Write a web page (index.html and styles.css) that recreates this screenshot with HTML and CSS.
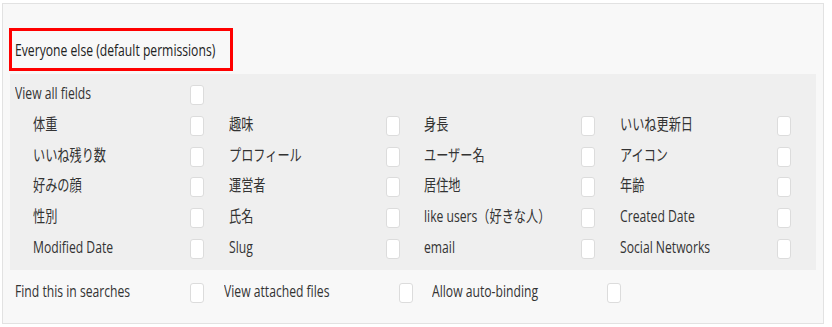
FILE: index.html
```html
<!DOCTYPE html>
<html lang="ja">
<head>
<meta charset="utf-8">
<title>Permissions</title>
<link rel="stylesheet" href="styles.css">
</head>
<body>
<div class="panel">
  <div class="head"><span class="txt title">Everyone else (default permissions)</span></div>
  <div class="fields">
    <div class="all-row"><span class="lbl"><span class="txt">View all fields</span></span><span class="cb"></span></div>
    <div class="grid">
      <div class="item"><span class="lbl"><span class="txt">体重</span></span><span class="cb"></span></div>
      <div class="item"><span class="lbl"><span class="txt">趣味</span></span><span class="cb"></span></div>
      <div class="item"><span class="lbl"><span class="txt">身長</span></span><span class="cb"></span></div>
      <div class="item"><span class="lbl"><span class="txt">いいね更新日</span></span><span class="cb"></span></div>
      <div class="item"><span class="lbl"><span class="txt">いいね残り数</span></span><span class="cb"></span></div>
      <div class="item"><span class="lbl"><span class="txt">プロフィール</span></span><span class="cb"></span></div>
      <div class="item"><span class="lbl"><span class="txt">ユーザー名</span></span><span class="cb"></span></div>
      <div class="item"><span class="lbl"><span class="txt">アイコン</span></span><span class="cb"></span></div>
      <div class="item"><span class="lbl"><span class="txt">好みの顔</span></span><span class="cb"></span></div>
      <div class="item"><span class="lbl"><span class="txt">運営者</span></span><span class="cb"></span></div>
      <div class="item"><span class="lbl"><span class="txt">居住地</span></span><span class="cb"></span></div>
      <div class="item"><span class="lbl"><span class="txt">年齢</span></span><span class="cb"></span></div>
      <div class="item"><span class="lbl"><span class="txt">性別</span></span><span class="cb"></span></div>
      <div class="item"><span class="lbl"><span class="txt">氏名</span></span><span class="cb"></span></div>
      <div class="item"><span class="lbl"><span class="txt">like users（好きな人）</span></span><span class="cb"></span></div>
      <div class="item"><span class="lbl"><span class="txt">Created Date</span></span><span class="cb"></span></div>
      <div class="item"><span class="lbl"><span class="txt">Modified Date</span></span><span class="cb"></span></div>
      <div class="item"><span class="lbl"><span class="txt">Slug</span></span><span class="cb"></span></div>
      <div class="item"><span class="lbl"><span class="txt">email</span></span><span class="cb"></span></div>
      <div class="item"><span class="lbl"><span class="txt">Social Networks</span></span><span class="cb"></span></div>
    </div>
  </div>
  <div class="opts">
    <div class="opt"><span class="lbl"><span class="txt">Find this in searches</span></span><span class="cb"></span></div>
    <div class="opt"><span class="lbl"><span class="txt">View attached files</span></span><span class="cb"></span></div>
    <div class="opt"><span class="lbl"><span class="txt">Allow auto-binding</span></span><span class="cb"></span></div>
  </div>
</div>
</body>
</html>
```
FILE: styles.css
```css
* { box-sizing: border-box; }
html, body { margin: 0; padding: 0; background: #ffffff; }
body {
  font-family: "Open Sans", "Noto Sans CJK JP", sans-serif;
  font-size: 16px;
  color: #333333;
}
.panel {
  margin: 3px 8px 0 2px;
  width: 822px;
  height: 321px;
  border: 1px solid #e2e2e2;
  background: #f8f8f8;
  padding: 0;
}
.head {
  margin: 24px 0 0 6px;
  width: 224px;
  height: 43px;
  border: 3px solid #ff0000;
  display: flex;
  align-items: center;
  padding-left: 3px;
}
.txt {
  display: inline-block;
  white-space: nowrap;
  transform: scaleX(0.76);
  transform-origin: left center;
  line-height: 20px;
}
.title { color: #222222; }
.fields {
  margin: 3px 0 0 7px;
  width: 806px;
  background: #efefef;
  padding: 11px 0 11px 5px;
}
.all-row, .item, .opt {
  display: flex;
  align-items: center;
  height: 20px;
}
.all-row .lbl { width: 175px; }
.grid {
  margin-top: 10.8px;
  padding-left: 18px;
  display: grid;
  grid-template-columns: repeat(4, 195.5px);
  row-gap: 10.8px;
}
.item .lbl { width: 157px; }
.lbl { display: block; margin-top: -4px; }
.cb {
  display: block;
  width: 14px;
  height: 20px;
  background: #ffffff;
  border: 1px solid #dcdcdc;
  border-radius: 3px;
  flex: none;
}
.opts {
  margin-top: 13px;
  padding-left: 12px;
  display: flex;
}
.opt { width: 208.5px; }
.opt .lbl { width: 175px; }
```
